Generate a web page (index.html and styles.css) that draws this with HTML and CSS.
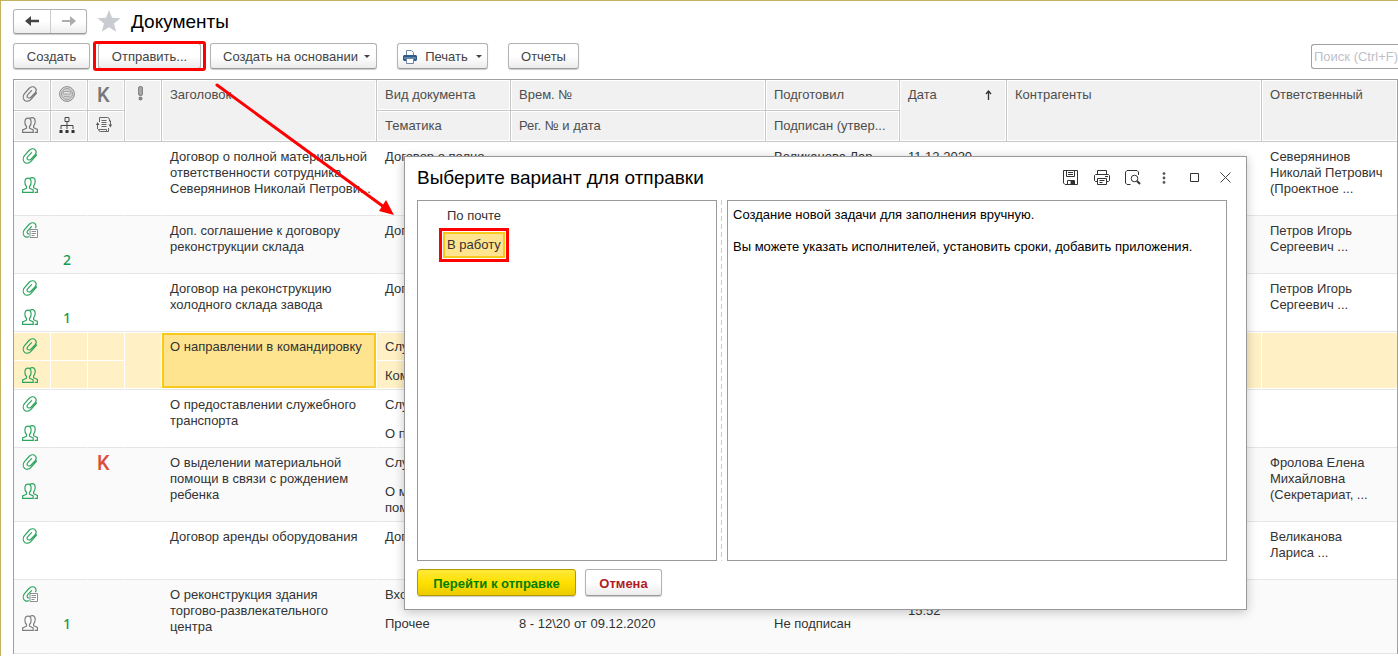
FILE: index.html
```html
<!DOCTYPE html>
<html lang="ru">
<head>
<meta charset="utf-8">
<title>Документы</title>
<link rel="stylesheet" href="styles.css">
</head>
<body>
<svg class="sprite" aria-hidden="true">
  <symbol id="clip" viewBox="0 0 16 16"><path d="M14.500 7 9 13.300C7 15.500 4 15.900 2.400 14.200.8 12.500.9 9.500 2.700 7.400L7 2.500C9 .4 11.800.2 13.200 1.800 14.600 3.300 14.100 5.600 12.800 7.100L8.900 11.200C7.700 12.300 6.200 12.200 5.500 11.400 4.800 10.500 5 9.300 6 8.300L9.600 4.600" fill="none" stroke="currentColor" stroke-width="1.200" stroke-linecap="round"/></symbol>
  <symbol id="clipdoc" viewBox="0 0 16 16"><path d="M6.500 14.700C4.900 15.500 3.500 15.300 2.400 14.200.8 12.500.9 9.500 2.700 7.400L7 2.500C9 .4 11.800.2 13.200 1.800 14.100 2.900 14.200 4.300 13.600 5.700M6.800 11.900C5.400 12.300 4.300 10 6 8.300L9.600 4.600" fill="none" stroke="currentColor" stroke-width="1.200" stroke-linecap="round"/><path d="M8 7.500H15.500V15.500H8Z" fill="#fff" stroke="#8a8f94"/><path d="M9.500 9.500H14M9.500 11.500H14M9.500 13.500H12.500" stroke="#8a8f94"/></symbol>
  <symbol id="people" viewBox="0 0 16 16"><path d="M.6 15.400V13L4.500 11.200V9.500C3.300 8.300 2.800 6.500 2.900 5 3 2.800 4.200 1.200 6 1.200S9 2.800 9.100 5C9.200 6.500 8.700 8.300 7.500 9.500V11.200L11.200 13V15.400ZM8 1.500C8.600.8 9.400.6 10.200.6 12 .6 13.200 2.200 13.200 4.600 13.200 6.200 12.700 7.800 11.600 9V10.700L15.400 12.500V15.400H12.600" fill="none" stroke="currentColor" stroke-width="1.200"/></symbol>
  <symbol id="caret" viewBox="0 0 6 4"><path d="M0 0H6L3 3Z" fill="#444"/></symbol>
</svg>

<main class="window">
  <header class="titlebar">
    <div class="history">
      <button type="button" aria-label="Назад"><svg width="14" height="10" viewBox="0 0 14 10"><path d="M6 0V3.700H14V6.300H6V10L0 5Z" fill="#444"/></svg></button>
      <button type="button" aria-label="Вперед"><svg width="14" height="10" viewBox="0 0 14 10"><path d="M8 0V4H0V6H8V10L14 5Z" fill="#adadad"/></svg></button>
    </div>
    <svg class="star" width="24" height="22" viewBox="0 0 24 22"><path d="M12 0 15 7.800 23.500 8.300 17 13.500 19.200 21.800 12 17.200 4.800 21.800 7 13.500.5 8.300 9 7.800Z" fill="#c9ccd0"/></svg>
    <h1>Документы</h1>
  </header>

  <div class="toolbar">
    <button type="button" class="btn create">Создать</button>
    <span class="marked"><button type="button" class="btn send">Отправить...</button></span>
    <button type="button" class="btn based">Создать на основании<svg width="6" height="4"><use href="#caret"/></svg></button>
    <button type="button" class="btn print"><svg width="14" height="14" viewBox="0 0 14 14"><path d="M3.500 5V.5H8.500L10.500 2.500V5" fill="#fff" stroke="#6d87a3"/><path d="M0 6 1 5H13L14 6V10L13 11H1L0 10Z" fill="#2f5d88"/><path d="M1 8H13" stroke="#89a9c6"/><path d="M3.500 8.500H10.500V13.500H3.500Z" fill="#fff" stroke="#6d87a3"/></svg>Печать<svg width="6" height="4"><use href="#caret"/></svg></button>
    <button type="button" class="btn reports">Отчеты</button>
    <input class="search" type="text" placeholder="Поиск (Ctrl+F)" aria-label="Поиск">
  </div>

  <div class="grid">
    <table>
      <colgroup><col class="c-icon"><col class="c-icon"><col class="c-icon"><col class="c-icon"><col class="c-title"><col class="c-kind"><col class="c-num"><col class="c-kind"><col class="c-date"><col class="c-num"><col></colgroup>
      <thead>
        <tr>
          <th class="ic"><svg width="16" height="16"><use href="#clip"/></svg></th>
          <th class="ic"><svg width="16" height="16" viewBox="0 0 16 16"><circle cx="8" cy="8" r="7.400" fill="#ddd" stroke="#888"/><circle cx="8" cy="8" r="5.500" fill="#d0d0d0" stroke="#a0a0a0"/><path d="M4.500 5.500H11.500V8H4.500Z" fill="#e3e3e3" stroke="#aaa"/><path d="M5 10.500H11" stroke="#aaa"/></svg></th>
          <th class="ic letter">K</th>
          <th class="ic" rowspan="2"><svg width="6" height="15" viewBox="0 0 6 15"><rect x=".5" y=".5" width="4" height="9" rx="1.500" fill="#a5a5a5" stroke="#858585"/><circle cx="2.500" cy="12.500" r="2" fill="#858585"/></svg></th>
          <th rowspan="2">Заголовок</th>
          <th>Вид документа</th><th>Врем. №</th><th>Подготовил</th>
          <th rowspan="2"><span class="sorted">Дата<svg width="7" height="10" viewBox="0 0 7 10"><path d="M3.500 10V1.500M1 4 3.500 1 6 4" fill="none" stroke="#333" stroke-width="1.300"/></svg></span></th>
          <th rowspan="2">Контрагенты</th><th rowspan="2">Ответственный</th>
        </tr>
        <tr>
          <th class="ic"><svg width="16" height="16"><use href="#people"/></svg></th>
          <th class="ic"><svg width="16" height="16" viewBox="0 0 16 16"><path d="M6 .5H10V4.500H6ZM8 5V12M2 12V8.500H14V12" fill="none" stroke="#444"/><path d="M.5 13H3.500V16H.5ZM6.500 13H9.500V16H6.500ZM12.500 13H15.500V16H12.500Z" fill="#333"/></svg></th>
          <th class="ic"><svg width="16" height="16" viewBox="0 0 16 16"><path d="M3.500 5V.5H11.500Q13.500.5 13.500 3V4.500M12.500 11V14.500H4.500Q2.500 14.500 2.500 12.500H10.500V14.500M5.500 3.500H10.500M5.500 5.500H10.500M5.500 7.500H10.500M5.500 9.500H10.500M1.500 12V7M14.500 3.500V9" fill="none" stroke="#666"/><path d="M0 8 1.500 5 3.500 8ZM12.500 7.500 14.500 10.500 16 7.500Z" fill="#555"/></svg></th>
          <th>Тематика</th><th>Рег. № и дата</th><th>Подписан (утвер...</th>
        </tr>
      </thead>
      <tbody class="tall">
        <tr><td class="ic"><svg width="16" height="16"><use href="#clip"/></svg></td><td></td><td></td><td rowspan="2"></td><td rowspan="2">Договор о полной материальной<br>ответственности сотрудника<br>Северянинов Николай Петрови...</td><td>Договор о полно...</td><td></td><td>Великанова Лар...</td><td rowspan="2">11.12.2020</td><td rowspan="2"></td><td rowspan="2">Северянинов<br>Николай Петрович<br>(Проектное ...</td></tr>
        <tr><td class="ic"><svg width="16" height="16"><use href="#people"/></svg></td><td></td><td></td><td></td><td></td><td></td></tr>
      </tbody>
      <tbody class="odd">
        <tr><td class="ic"><svg width="16" height="16"><use href="#clipdoc"/></svg></td><td></td><td></td><td rowspan="2"></td><td rowspan="2">Доп. соглашение к договору<br>реконструкции склада</td><td>Договор</td><td></td><td></td><td rowspan="2"></td><td rowspan="2"></td><td rowspan="2">Петров Игорь<br>Сергеевич ...</td></tr>
        <tr><td></td><td class="count">2</td><td></td><td></td><td></td><td></td></tr>
      </tbody>
      <tbody>
        <tr><td class="ic"><svg width="16" height="16"><use href="#clip"/></svg></td><td></td><td></td><td rowspan="2"></td><td rowspan="2">Договор на реконструкцию<br>холодного склада завода</td><td>Договор</td><td></td><td></td><td rowspan="2"></td><td rowspan="2"></td><td rowspan="2">Петров Игорь<br>Сергеевич ...</td></tr>
        <tr><td class="ic"><svg width="16" height="16"><use href="#people"/></svg></td><td class="count">1</td><td></td><td></td><td></td><td></td></tr>
      </tbody>
      <tbody class="current">
        <tr><td class="ic"><svg width="16" height="16"><use href="#clip"/></svg></td><td></td><td></td><td rowspan="2"></td><td rowspan="2" class="focus">О направлении в командировку</td><td>Служебная</td><td></td><td></td><td rowspan="2"></td><td rowspan="2"></td><td rowspan="2"></td></tr>
        <tr><td class="ic"><svg width="16" height="16"><use href="#people"/></svg></td><td></td><td></td><td>Командировка</td><td></td><td></td></tr>
      </tbody>
      <tbody>
        <tr><td class="ic"><svg width="16" height="16"><use href="#clip"/></svg></td><td></td><td></td><td rowspan="2"></td><td rowspan="2">О предоставлении служебного<br>транспорта</td><td>Служебная</td><td></td><td></td><td rowspan="2"></td><td rowspan="2"></td><td rowspan="2"></td></tr>
        <tr><td class="ic"><svg width="16" height="16"><use href="#people"/></svg></td><td></td><td></td><td>О предоставле...</td><td></td><td></td></tr>
      </tbody>
      <tbody class="tall odd">
        <tr><td class="ic"><svg width="16" height="16"><use href="#clip"/></svg></td><td></td><td class="ic letter">K</td><td rowspan="2"></td><td rowspan="2">О выделении материальной<br>помощи в связи с рождением<br>ребенка</td><td>Служебная</td><td></td><td></td><td rowspan="2"></td><td rowspan="2"></td><td rowspan="2">Фролова Елена<br>Михайловна<br>(Секретариат, ...</td></tr>
        <tr><td class="ic"><svg width="16" height="16"><use href="#people"/></svg></td><td></td><td></td><td>О материальной<br>помощи</td><td></td><td></td></tr>
      </tbody>
      <tbody>
        <tr><td class="ic"><svg width="16" height="16"><use href="#clip"/></svg></td><td></td><td></td><td rowspan="2"></td><td rowspan="2">Договор аренды оборудования</td><td>Договор</td><td></td><td></td><td rowspan="2"></td><td rowspan="2"></td><td rowspan="2">Великанова<br>Лариса ...</td></tr>
        <tr><td></td><td></td><td></td><td></td><td></td><td></td></tr>
      </tbody>
      <tbody class="tall odd">
        <tr><td class="ic"><svg width="16" height="16"><use href="#clipdoc"/></svg></td><td></td><td></td><td rowspan="2"></td><td rowspan="2">О реконструкция здания<br>торгово-развлекательного<br>центра</td><td>Входящее</td><td></td><td></td><td rowspan="2">09.12.2020<br>15:52</td><td rowspan="2"></td><td rowspan="2"></td></tr>
        <tr><td class="ic muted"><svg width="16" height="16"><use href="#people"/></svg></td><td class="count">1</td><td></td><td>Прочее</td><td>8 - 12\20 от 09.12.2020</td><td>Не подписан</td></tr>
      </tbody>
    </table>
  </div>
</main>

<section class="dialog" role="dialog" aria-labelledby="dlg-title">
  <header class="dialog-head">
    <h2 id="dlg-title">Выберите вариант для отправки</h2>
    <div class="tools">
      <button type="button" aria-label="Сохранить"><svg width="16" height="16" viewBox="0 0 16 16" fill="none" stroke="#333"><path d="M.5.500H14.500V14.500H2L.5 13ZM3.500.5V6.500H11.500V.5M5 2.500H10M5 4.500H10M4.500 14V10.500H11.500V14"/><path d="M8 11H11V14H8Z" fill="#333"/></svg></button>
      <button type="button" aria-label="Печать"><svg width="16" height="16" viewBox="0 0 16 16" fill="none" stroke="#333"><path d="M3.500 4V.5H12.500V4M3.500 11.500H1.500L.5 10.500V5.500L1.500 4.500H14.500L15.500 5.500V10.500L14.500 11.500H12.500M3.500 8.500H12.500V14.500H3.500ZM5.500 10.500H10.500M5.500 12.500H8.500M11 6.500H14"/></svg></button>
      <button type="button" aria-label="Просмотр"><svg width="16" height="16" viewBox="0 0 16 16" fill="none" stroke="#333"><path d="M13.500 5V2L12 .5H2L.5 2V13L2 14.500H5.500"/><circle cx="9.500" cy="8.500" r="3.300"/><path d="M12 11 15 14" stroke-width="2"/></svg></button>
      <button type="button" aria-label="Еще"><svg width="4" height="12" viewBox="0 0 4 12" fill="#555"><circle cx="2" cy="1.600" r="1.400"/><circle cx="2" cy="6" r="1.400"/><circle cx="2" cy="10.400" r="1.400"/></svg></button>
      <button type="button" aria-label="Развернуть"><svg width="9" height="9" viewBox="0 0 9 9"><path d="M.5.500H8.500V8.500H.5Z" fill="none" stroke="#333"/></svg></button>
      <button type="button" aria-label="Закрыть"><svg width="11" height="11" viewBox="0 0 11 11"><path d="M.5.500 10.500 10.500M10.500.5.500 10.500" stroke="#444"/></svg></button>
    </div>
  </header>
  <div class="panes">
    <ul class="variants">
      <li><button type="button">По почте</button></li>
      <li><button type="button" class="chosen">В работу</button></li>
    </ul>
    <div class="splitter"></div>
    <div class="hint">
      <p>Создание новой задачи для заполнения вручную.</p>
      <p>Вы можете указать исполнителей, установить сроки, добавить приложения.</p>
    </div>
  </div>
  <footer class="dialog-foot">
    <button type="button" class="btn primary">Перейти к отправке</button>
    <button type="button" class="btn cancel">Отмена</button>
  </footer>
</section>

<svg class="pointer" width="190" height="140" viewBox="0 0 190 140" aria-hidden="true"><path d="M7 5 174 127" stroke="#f00" stroke-width="3" stroke-linecap="round"/><path d="M184 135 169 131 176 120Z" fill="#f00"/></svg>
</body>
</html>
```

FILE: styles.css
```css
* { box-sizing: border-box; }

html, body { height: 100%; }

body {
  margin: 0;
  overflow: hidden;
  background: #fff;
  color: #333;
  font: 13px/16px "Liberation Sans", Arial, sans-serif;
}

button, input { font: inherit; color: inherit; }

h1, h2, p, ul { margin: 0; padding: 0; font-weight: normal; }

svg { display: block; flex: none; }

.sprite { position: absolute; width: 0; height: 0; }

.window {
  position: relative;
  height: 100%;
  overflow: hidden;
  border-top: 1px solid #c5b260;
  border-left: 1px solid #c5b260;
  padding-left: 12px;
}

/* title bar */
.titlebar {
  display: flex;
  align-items: center;
  height: 40px;
}

.titlebar h1 { padding-top: 2px; font-size: 19px; line-height: 24px; color: #000; }

.star { margin: 0 10px; }

.history {
  display: flex;
  height: 25px;
  border: 1px solid #b3b3b3;
  border-bottom-color: #999;
  border-radius: 3px;
  background: linear-gradient(#fff 50%, #ededed);
  box-shadow: 0 1px 1px #ccc;
}

.history button {
  display: flex;
  align-items: center;
  justify-content: center;
  width: 36px;
  padding: 0;
  border: 0;
  background: none;
}

.history button + button { border-left: 1px solid #ccc; }

/* toolbar */
.toolbar {
  display: flex;
  align-items: center;
  height: 30px;
  margin-bottom: 8px;
}

.btn {
  display: flex;
  align-items: center;
  justify-content: center;
  height: 26px;
  padding: 2px 0 0;
  border: 1px solid #b3b3b3;
  border-bottom-color: #999;
  border-radius: 3px;
  background: linear-gradient(#fff 50%, #ececec);
  box-shadow: 0 1px 1px #ccc;
  color: #444;
  white-space: nowrap;
}

.create { width: 77px; }

.marked {
  margin: 0 6px 0 5px;
  padding: 0 2px;
  outline: 3px solid #f00;
  outline-offset: -1px;
  border-radius: 1px;
}

.send { width: 103px; margin: 0 1px; }
.based { width: 167px; gap: 6px; padding-left: 6px; }
.print { width: 91px; gap: 8px; margin-left: 20px; }
.reports { width: 71px; margin-left: 20px; }

.search {
  width: 87px;
  height: 25px;
  margin-left: auto;
  padding: 0 0 0 2px;
  border: 1px solid #a0a0a0;
  border-right: 0;
  border-radius: 3px 0 0 3px;
}

.search::placeholder { color: #c0c0c8; opacity: 1; }

/* document list */
.grid { border: 1px solid #a0a0a0; border-bottom: 0; }

table {
  width: 100%;
  table-layout: fixed;
  border-collapse: separate;
  border-spacing: 0;
}

.c-icon { width: 37px; }
.c-title { width: 215px; }
.c-kind { width: 134px; }
.c-num { width: 255px; }
.c-date { width: 107px; }

th, td {
  padding: 7px 8px 0;
  vertical-align: top;
  text-align: left;
  font-weight: normal;
  white-space: nowrap;
}

th {
  height: 31px;
  border-right: 1px solid #c8c8c8;
  border-bottom: 1px solid #c8c8c8;
  box-shadow: inset 0 0 0 1px #fff;
  background: #f1f1f1;
  color: #4d4d4d;
}

.sorted { display: flex; align-items: center; justify-content: space-between; padding-right: 6px; }

.ic { padding-left: 8px; padding-right: 0; }
th.ic { color: #777; }
td.ic { color: #2ea55f; }
td.muted { color: #808080; }
.ic svg { margin-top: -1px; }
th.ic[rowspan] { padding-left: 13px; }

.letter { padding-left: 9px; font: 500 20px/16px Roboto, sans-serif; }
td.letter { color: #d9503f; }

td { border-right: 1px solid transparent; }
th[rowspan]:last-child, td[rowspan]:last-child { border-right: 0; }
tbody tr:first-child td { height: 28px; }
tbody tr:last-child td { height: 30px; padding-top: 8px; border-bottom: 1px solid #e5e5e5; }
tbody tr td[rowspan] { border-bottom: 1px solid #e5e5e5; }
.tall tr:last-child td { height: 46px; }
.odd { background: #fafafa; }

td.count { padding-left: 12px; color: #159a52; font: 500 14px/16px "Noto Sans", sans-serif; }

.current td { background: #fff1c5; border-right-color: #fff; box-shadow: inset 0 1px #fff; }
.current tr:last-child td { box-shadow: inset 0 1px #fff, inset 0 -1px #fff; }
.current td[rowspan] { box-shadow: inset 0 1px #fff, inset 0 -1px #fff; }
.current td.focus {
  background: #ffe48f;
  box-shadow: inset 0 1px #fff, inset 0 -1px #fff, inset 2px 0 #f8c91c, inset -2px 0 #f8c91c, inset 0 3px #f8c91c, inset 0 -3px #f8c91c;
}

/* send dialog */
.dialog {
  position: absolute;
  top: 156px;
  left: 404px;
  right: 151px;
  padding: 0 19px 13px 12px;
  border: 1px solid #999;
  background: #fff;
  box-shadow: 0 2px 10px rgba(0, 0, 0, .22);
}

.dialog-head {
  display: flex;
  align-items: center;
  justify-content: space-between;
  height: 43px;
  padding-bottom: 2px;
}

.dialog-head h2 { font-size: 19px; line-height: 24px; color: #000; }

.tools { display: flex; align-items: center; margin-right: -14px; }

.tools button {
  display: flex;
  align-items: center;
  justify-content: center;
  width: 31px;
  height: 24px;
  padding: 0;
  border: 0;
  background: none;
}

.panes {
  display: grid;
  grid-template-columns: 3fr 10px 5fr;
  height: 361px;
}

.variants, .hint { border: 1px solid #999; }

.variants { padding: 2px 0 0 25px; list-style: none; }
.variants li { height: 29px; }

.variants button {
  height: 26px;
  padding: 0 3px;
  border: 1px solid transparent;
  background: none;
}

.variants .chosen {
  border: 2px solid #f8c91c;
  padding: 0 2px;
  background: #ffe48f;
  outline: 3px solid #f00;
  outline-offset: 1px;
}

.splitter { width: 1px; margin-left: 4px; background: repeating-linear-gradient(#ccc 0 5px, #fff 5px 8px); }

.hint { padding: 6px 5px; color: #000; }
.hint p + p { margin-top: 16px; }

.dialog-foot { display: flex; gap: 9px; padding-top: 8px; }
.dialog-foot .btn { height: 27px; font-weight: bold; }

.primary {
  width: 159px;
  border-color: #b09a00;
  background: linear-gradient(#ffe93a, #ffe000 50%, #ecca00);
  color: #008000;
}

.cancel { width: 77px; color: #b01c24; }

/* arrow from the toolbar button to the dialog */
.pointer { position: absolute; top: 80px; left: 210px; }
```
